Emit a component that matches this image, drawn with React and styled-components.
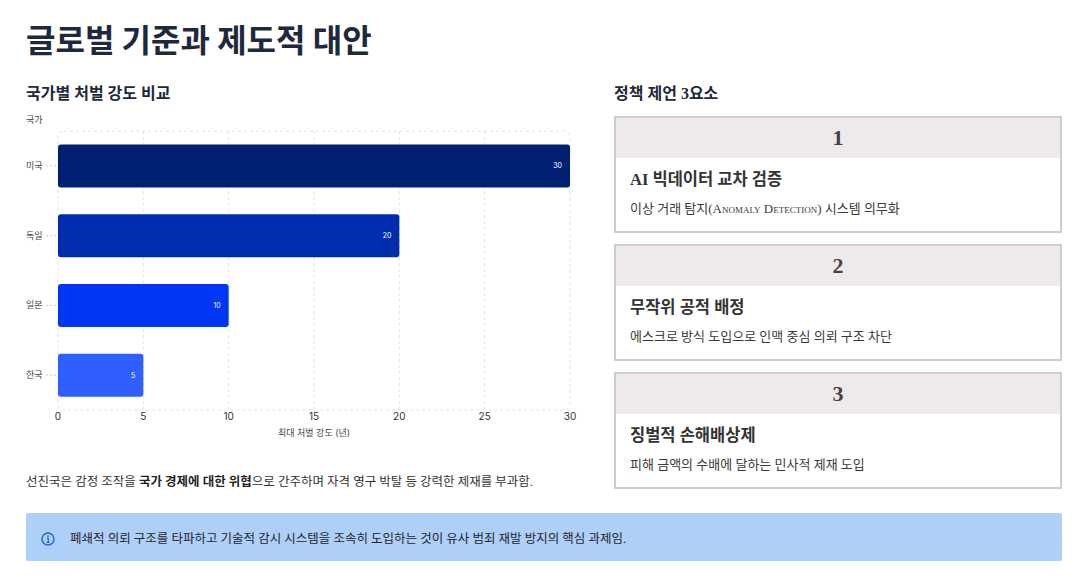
import styled, { createGlobalStyle } from 'styled-components';

const GlobalStyle = createGlobalStyle`
  html, body {
    margin: 0;
    padding: 0;
    background: #ffffff;
  }
  body {
    font-family: "Liberation Serif", "Noto Sans CJK KR", serif;
    color: #1e293b;
  }
`;

const countries = [
  { name: '미국', value: 30, color: '#002171' },
  { name: '독일', value: 20, color: '#002dad' },
  { name: '일본', value: 10, color: '#0037f5' },
  { name: '한국', value: 5, color: '#2f5fff' },
];

const proposals = [
  {
    no: 1,
    title: 'AI 빅데이터 교차 검증',
    desc: '이상 거래 탐지(Anomaly Detection) 시스템 의무화',
  },
  {
    no: 2,
    title: '무작위 공적 배정',
    desc: '에스크로 방식 도입으로 인맥 중심 의뢰 구조 차단',
  },
  {
    no: 3,
    title: '징벌적 손해배상제',
    desc: '피해 금액의 수배에 달하는 민사적 제재 도입',
  },
];

const Page = styled.div`
  width: 1090px;
  height: 586px;
  box-sizing: border-box;
  padding: 19px 28px 0 26px;
  overflow: hidden;
`;

const Title = styled.h1`
  margin: 0;
  font-family: "Noto Sans CJK KR", sans-serif;
  font-size: 32px;
  line-height: 38px;
  font-weight: 700;
  color: #1e293b;
`;

const Columns = styled.div`
  display: grid;
  grid-template-columns: 554px 448px;
  column-gap: 34px;
  margin-top: 27px;
`;

const Column = styled.section`
  display: flex;
  flex-direction: column;
`;

const SectionTitle = styled.h2`
  margin: 0;
  font-size: 16px;
  line-height: 20px;
  font-weight: 700;
  color: #1e293b;
`;

const ChartBox = styled.div`
  margin-top: 8px;
  width: 554px;
  height: 330px;
  font-family: Inter, "Noto Sans CJK KR", sans-serif;
`;

const Summary = styled.p`
  margin: 30px 0 0;
  font-size: 12.5px;
  line-height: 20px;
  color: #333333;

  strong {
    font-weight: 700;
    color: #1f1f1f;
  }
`;

const CardList = styled.div`
  display: flex;
  flex-direction: column;
  gap: 11px;
  margin-top: 12px;
`;

const Card = styled.article`
  height: 117px;
  box-sizing: border-box;
  border: 2px solid #d0cbcc;
  background: #ffffff;
  display: flex;
  flex-direction: column;
`;

const CardHead = styled.div`
  height: 40px;
  background: #eeeae9;
  display: flex;
  align-items: center;
  justify-content: center;
  font-size: 22px;
  font-weight: 700;
  color: #444444;
`;

const CardBody = styled.div`
  padding: 11px 14px 0 14px;
`;

const CardTitle = styled.h3`
  margin: 0;
  font-size: 16.5px;
  line-height: 22px;
  font-weight: 700;
  color: #333333;
`;

const CardDesc = styled.p`
  margin: 9px 0 0;
  font-size: 13px;
  line-height: 18px;
  color: #3a3a3a;
  font-variant: small-caps;
`;

const InfoBox = styled.div`
  margin-top: 21px;
  height: 48px;
  background: #aecff7;
  border-radius: 2px;
  display: flex;
  align-items: center;
  padding-left: 15px;
  gap: 15px;
`;

const InfoText = styled.span`
  font-size: 12.5px;
  color: #1f2430;
`;

const InfoIcon = () => (
  <svg width="14" height="14" viewBox="0 0 14 14" style={{ marginTop: 4 }}>
    <circle cx="7" cy="7" r="6" fill="none" stroke="#1a67dc" strokeWidth="1.4" />
    <circle cx="7" cy="4.2" r="0.9" fill="#1a67dc" />
    <path d="M6 6.3h1.3v4M5.8 10.3h2.6" fill="none" stroke="#1a67dc" strokeWidth="1.2" />
  </svg>
);

const PenaltyChart = () => {
  const left = 32;
  const right = 544;
  const top = 19;
  const bottom = 298;
  const band = (bottom - top) / countries.length;
  const barH = 43;
  const scale = (right - left) / 30;
  const ticks = [0, 5, 10, 15, 20, 25, 30];

  return (
    <svg width="554" height="330" viewBox="0 0 554 330">
      <text x="0" y="11" fontSize="9" fill="#444">국가</text>
      <rect
        x={left}
        y={top}
        width={right - left}
        height={bottom - top}
        rx="6"
        fill="none"
        stroke="#e2e2e2"
        strokeDasharray="3 3"
      />
      {ticks.slice(1, -1).map((t) => (
        <line
          key={t}
          x1={left + t * scale}
          x2={left + t * scale}
          y1={top}
          y2={bottom}
          stroke="#e2e2e2"
          strokeDasharray="3 3"
        />
      ))}
      {countries.map((c, i) => {
        const cy = top + band * i + band / 2;
        const w = c.value * scale;
        return (
          <g key={c.name}>
            <text x="0" y={cy + 3} fontSize="9" fill="#444">{c.name}</text>
            <line x1="20" x2={left - 2} y1={cy} y2={cy} stroke="#cfcfcf" strokeDasharray="2 2" />
            <rect x={left} y={cy - barH / 2} width={w} height={barH} rx="3" fill={c.color} />
            <text
              x={left + w - 8}
              y={cy + 2.5}
              fontSize="7"
              fill="#ffffff"
              textAnchor="end"
            >
              {c.value}
            </text>
          </g>
        );
      })}
      {ticks.map((t) => (
        <text
          key={t}
          x={left + t * scale}
          y="308"
          fontSize="10"
          fill="#333"
          textAnchor="middle"
        >
          {t}
        </text>
      ))}
      <text x={(left + right) / 2} y="324" fontSize="9" fill="#444" textAnchor="middle">
        최대 처벌 강도 (년)
      </text>
    </svg>
  );
};

export default function App() {
  return (
    <>
      <GlobalStyle />
      <Page>
        <Title>글로벌 기준과 제도적 대안</Title>
        <Columns>
          <Column>
            <SectionTitle>국가별 처벌 강도 비교</SectionTitle>
            <ChartBox>
              <PenaltyChart />
            </ChartBox>
            <Summary>
              선진국은 감정 조작을 <strong>국가 경제에 대한 위협</strong>으로 간주하며 자격 영구 박탈 등
              강력한 제재를 부과함.
            </Summary>
          </Column>
          <Column>
            <SectionTitle>정책 제언 3요소</SectionTitle>
            <CardList>
              {proposals.map((p) => (
                <Card key={p.no}>
                  <CardHead>{p.no}</CardHead>
                  <CardBody>
                    <CardTitle>{p.title}</CardTitle>
                    <CardDesc>{p.desc}</CardDesc>
                  </CardBody>
                </Card>
              ))}
            </CardList>
          </Column>
        </Columns>
        <InfoBox>
          <InfoIcon />
          <InfoText>
            폐쇄적 의뢰 구조를 타파하고 기술적 감시 시스템을 조속히 도입하는 것이 유사 범죄 재발 방지의 핵심 과제임.
          </InfoText>
        </InfoBox>
      </Page>
    </>
  );
}
